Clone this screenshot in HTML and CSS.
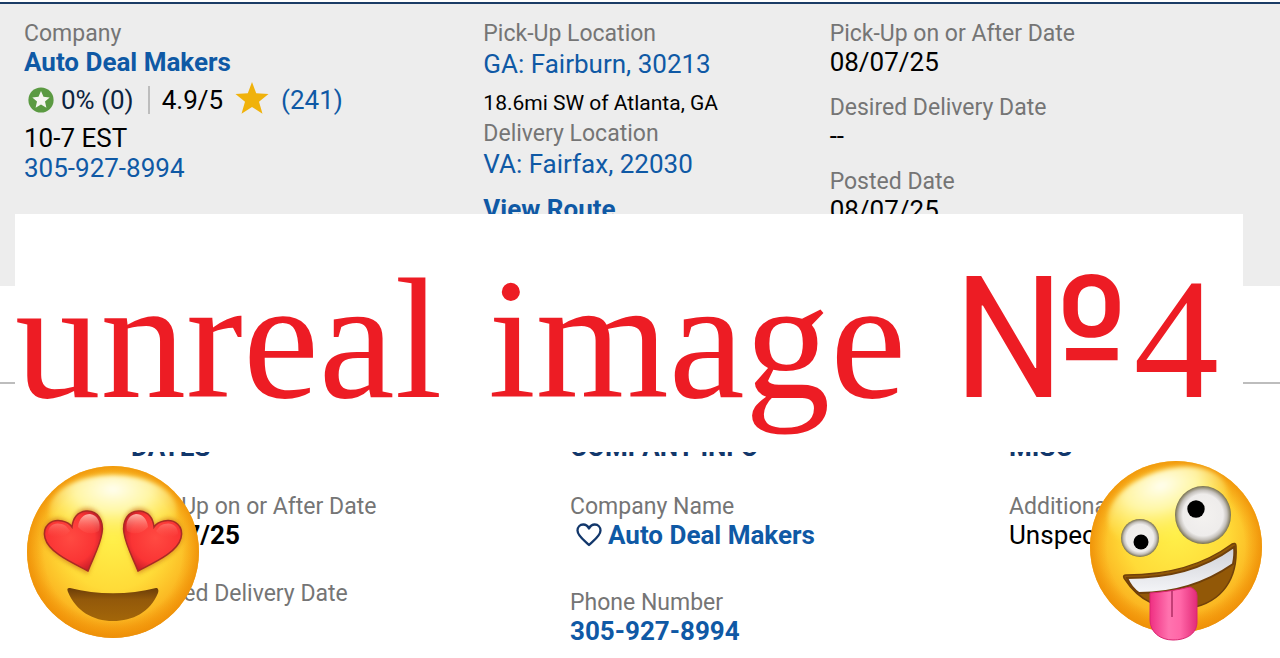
FILE: index.html
```html
<!DOCTYPE html>
<html lang="en">
<head>
<meta charset="utf-8">
<title>Auto Deal Makers</title>
<link rel="stylesheet" href="styles.css">
</head>
<body>
<header class="summary">
  <section class="col">
    <div class="label">Company</div>
    <a class="value link bold" href="#">Auto Deal Makers</a>
    <div class="rating">
      <svg class="badge" viewBox="0 0 26 26" aria-hidden="true"><circle cx="13" cy="13" r="12.6" fill="#5b9a42"/><path d="M13 4l2.500 5.800 6.200.6-4.700 4.200 1.400 6.200-5.400-3.300-5.400 3.300L9 14.600l-4.700-4.200 6.200-.6z" fill="#f5f5f0"/></svg>
      <span class="percent">0% (0)</span>
      <span class="divider"></span>
      <span>4.9/5</span>
      <svg class="star" viewBox="0 0 34 34" aria-hidden="true"><path d="M17 1l4.200 11.200L33.500 13l-9.500 7.800 3.500 12L17 26 6.500 32.800l3.500-12L.5 13l12.300-.8z" fill="#f0b20b"/></svg>
      <a class="link" href="#">(241)</a>
    </div>
    <div class="value">10-7 EST</div>
    <a class="value link" href="#">305-927-8994</a>
  </section>
  <section class="col">
    <div class="label">Pick-Up Location</div>
    <a class="value link place" href="#">GA: Fairburn, 30213</a>
    <div class="distance">18.6mi SW of Atlanta, GA</div>
    <div class="label">Delivery Location</div>
    <a class="value link place" href="#">VA: Fairfax, 22030</a>
    <a class="value link bold route" href="#">View Route</a>
  </section>
  <section class="col dates">
    <div><div class="label">Pick-Up on or After Date</div><div class="value">08/07/25</div></div>
    <div><div class="label">Desired Delivery Date</div><div class="value">--</div></div>
    <div><div class="label">Posted Date</div><div class="value">08/07/25</div></div>
  </section>
</header>
<main class="details">
  <section class="col">
    <h2>DATES</h2>
    <div class="label">Pick-Up on or After Date</div>
    <div class="value bold">08/07/25</div>
    <div class="label second">Desired Delivery Date</div>
  </section>
  <section class="col">
    <h2>COMPANY INFO</h2>
    <div class="label">Company Name</div>
    <a class="value link bold company" href="#"><svg class="heart" viewBox="0 0 26 24" aria-hidden="true"><path d="M13 22C9 18 1.500 13 1.500 7.500 1.500 4 4 1.500 7.200 1.500c2.600 0 4.600 1.500 5.800 4 1.200-2.500 3.200-4 5.800-4 3.200 0 5.700 2.500 5.700 6C24.500 13 17 18 13 22z" fill="none" stroke="#12376b" stroke-width="2.300" stroke-linejoin="round"/></svg>Auto Deal Makers</a>
    <div class="label third">Phone Number</div>
    <a class="value link bold" href="#">305-927-8994</a>
  </section>
  <section class="col">
    <h2>MISC</h2>
    <div class="label">Additional Info</div>
    <div class="value">Unspecified</div>
  </section>
</main>
<div class="banner"><span>unreal</span><span>image</span><span><span class="numero">№</span>4</span></div>
<svg class="emoji love" viewBox="0 0 176 184" role="img" aria-label="Heart eyes face">
  <defs>
    <radialGradient id="face" cx=".5" cy=".42" r=".6"><stop offset="0" stop-color="#fff04a"/><stop offset=".5" stop-color="#ffdb38"/><stop offset=".78" stop-color="#fbb722"/><stop offset=".92" stop-color="#f3980e"/><stop offset="1" stop-color="#dc7c08"/></radialGradient>
    <radialGradient id="rim" cx=".5" cy=".5" r=".5"><stop offset=".8" stop-color="#f59a0c" stop-opacity="0"/><stop offset="1" stop-color="#ef9208" stop-opacity=".85"/></radialGradient>
    <radialGradient id="shine" cx=".5" cy=".2" r=".75"><stop offset="0" stop-color="#fffef0"/><stop offset=".4" stop-color="#fffbb8" stop-opacity=".85"/><stop offset="1" stop-color="#ffed45" stop-opacity="0"/></radialGradient>
    <radialGradient id="love" cx=".45" cy=".45" r=".6"><stop offset="0" stop-color="#ff4a42"/><stop offset=".7" stop-color="#fa3434"/><stop offset="1" stop-color="#c91c28"/></radialGradient>
    <linearGradient id="gloss" x1="0" y1="0" x2="0" y2="1"><stop offset="0" stop-color="#ffb3a8"/><stop offset="1" stop-color="#ff5349" stop-opacity="0"/></linearGradient>
    <linearGradient id="mouth" x1="0" y1="0" x2="0" y2="1"><stop offset="0" stop-color="#6b3d08"/><stop offset=".35" stop-color="#93590a"/><stop offset="1" stop-color="#a36609"/></linearGradient>
    <filter id="soft" x="-20%" y="-20%" width="140%" height="140%"><feGaussianBlur stdDeviation="2"/></filter>
  </defs>
  <circle cx="88" cy="88" r="86" fill="url(#face)"/>
  <circle cx="88" cy="88" r="86" fill="url(#rim)"/>
  <ellipse cx="88" cy="47" rx="64" ry="36" fill="url(#shine)" filter="url(#soft)"/>
  <g id="heart-eye">
    <path d="M63 110C48 102 23 91 19 75c-3-14 7-24 18-20 5 1 8 4 10 6 1-10 6-17 15-17 12 0 17 12 15 24-2 13-9 28-14 42z" fill="#c76a14" opacity=".6" filter="url(#soft)"/>
    <path d="M63 107C48 99 24 89 20 74c-3-12 6-19 17-17 5 1 8 3 10 6 1-9 6-15 14-16 12-1 18 10 16 22-2 13-9 25-14 38z" fill="url(#love)" stroke="#a92b24" stroke-width="1.500"/>
    <path d="M23 70c0-10 9-13 18-8l4 5c-5 6-14 9-22 3zM53 63c1-9 6-13 12-13 8 1 11 9 9 17-7 4-15 3-21-4z" fill="url(#gloss)"/>
  </g>
  <use href="#heart-eye" transform="matrix(-1 0 0 1 176 0)"/>
  <path d="M45 124c27 7 59 7 86 0 2 0 3 2 2 5-8 19-25 28-45 28s-37-10-45-29c-1-3-1-4 2-4z" fill="url(#mouth)"/>
</svg>
<svg class="emoji zany" viewBox="0 0 176 184" role="img" aria-label="Zany face">
  <defs>
    <radialGradient id="eye" cx=".5" cy=".5" r=".5"><stop offset="0" stop-color="#f4f2f0"/><stop offset=".72" stop-color="#eeeceb"/><stop offset=".86" stop-color="#c4c0bb"/><stop offset="1" stop-color="#77704f"/></radialGradient>
    <linearGradient id="tongue"><stop offset="0" stop-color="#ef2f82"/><stop offset=".4" stop-color="#ff73af"/><stop offset=".65" stop-color="#ff66a7"/><stop offset="1" stop-color="#e32b78"/></linearGradient>
    <linearGradient id="teeth" x1="0" y1="0" x2="0" y2="1"><stop offset="0" stop-color="#cfd0d6"/><stop offset="1" stop-color="#f4f5f8"/></linearGradient>
  </defs>
  <circle cx="88" cy="88" r="86" fill="url(#face)"/>
  <circle cx="88" cy="88" r="86" fill="url(#rim)"/>
  <ellipse cx="80" cy="48" rx="62" ry="37" fill="url(#shine)" filter="url(#soft)" transform="rotate(-18 80 48)"/>
  <ellipse cx="115" cy="56" rx="28" ry="29" fill="url(#eye)"/><circle cx="108" cy="50" r="8.700" fill="#000"/>
  <circle cx="52" cy="79" r="19" fill="url(#eye)"/><circle cx="53" cy="83" r="7.500" fill="#000"/>
  <path d="M38 116c38 0 75-8 106-31 2-1 4-1 4 2 2 33-14 56-45 62-30 5-53-8-67-30-1-2 0-3 2-3z" fill="#925807" stroke="#70400a" stroke-width="1.500"/>
  <path d="M39 119c42 0 75-8 107-31 1 7 0 12-1 17-26 18-58 29-94 29-5-3-9-8-12-15z" fill="url(#teeth)" stroke="#70400a" stroke-width="2"/>
  <path d="M62 134c13-1 28-3 40-6 5 2 7 5 7 9v26c0 12-11 18-24 18s-23-8-23-20z" fill="url(#tongue)" stroke="#d92672"/>
  <path d="M84 132v26" stroke="#a52459" stroke-width="1.300"/>
</svg>
</body>
</html>
```
FILE: styles.css
```css
* { box-sizing: border-box; }
body {
  margin: 0;
  min-height: 100vh;
  position: relative;
  overflow: hidden;
  background: #fff;
  color: #000;
  font: 26px/30px Roboto, sans-serif;
}
.summary {
  display: grid;
  grid-template-columns: 459fr 346fr 426fr;
  min-height: 284px;
  margin-top: 2px;
  padding: 15px 24px 36px;
  border-top: 2px solid #1b3c66;
  background: #ededed;
}
.col { display: flex; flex-direction: column; align-items: flex-start; }
.label { color: #757575; font-size: 23px; line-height: 28px; padding-top: 1px; margin-bottom: -1px; }
.link { color: #0f59a5; text-decoration: none; }
.bold { font-weight: 700; }
.rating { display: flex; align-items: center; margin: 8px 0; }
.badge { width: 26px; height: 26px; margin: 0 7px 0 4px; }
.percent { color: #0c2340; }
.divider { width: 2px; height: 28px; margin: 0 12px 0 14px; background: #bdbdbd; }
.star { width: 34px; height: 34px; margin: -4px 12px 0 12px; }
.place { margin-top: 2px; }
.distance { margin: 9px 0 1px; font-size: 21px; }
.route { margin-top: 15px; }
.dates { gap: 16px; }
.details {
  display: grid;
  grid-template-columns: 439fr 439fr 271fr;
  margin-top: 96px;
  padding: 48px 0 0 131px;
  border-top: 2px solid #bdbdbd;
}
h2 { margin: 0 0 30px; color: #12376b; font-size: 26px; line-height: 30px; }
.second { margin-top: 29px; }
.third { margin-top: 38px; }
.company { display: flex; align-items: center; }
.heart { width: 26px; height: 24px; margin: 0 6px; }
.banner {
  position: absolute;
  top: 214px;
  left: 15px;
  right: 37px;
  height: 238px;
  display: flex;
  gap: 46px;
  background: #fff;
  color: #ed1c24;
  font: 171px/252px "Liberation Serif", serif;
  white-space: nowrap;
}
.numero { font-family: Inter, sans-serif; font-size: 166px; line-height: 1px; }
.emoji { position: absolute; width: 176px; height: 184px; }
.love { left: 25px; top: 464px; }
.zany { right: 16px; top: 459px; }
```
